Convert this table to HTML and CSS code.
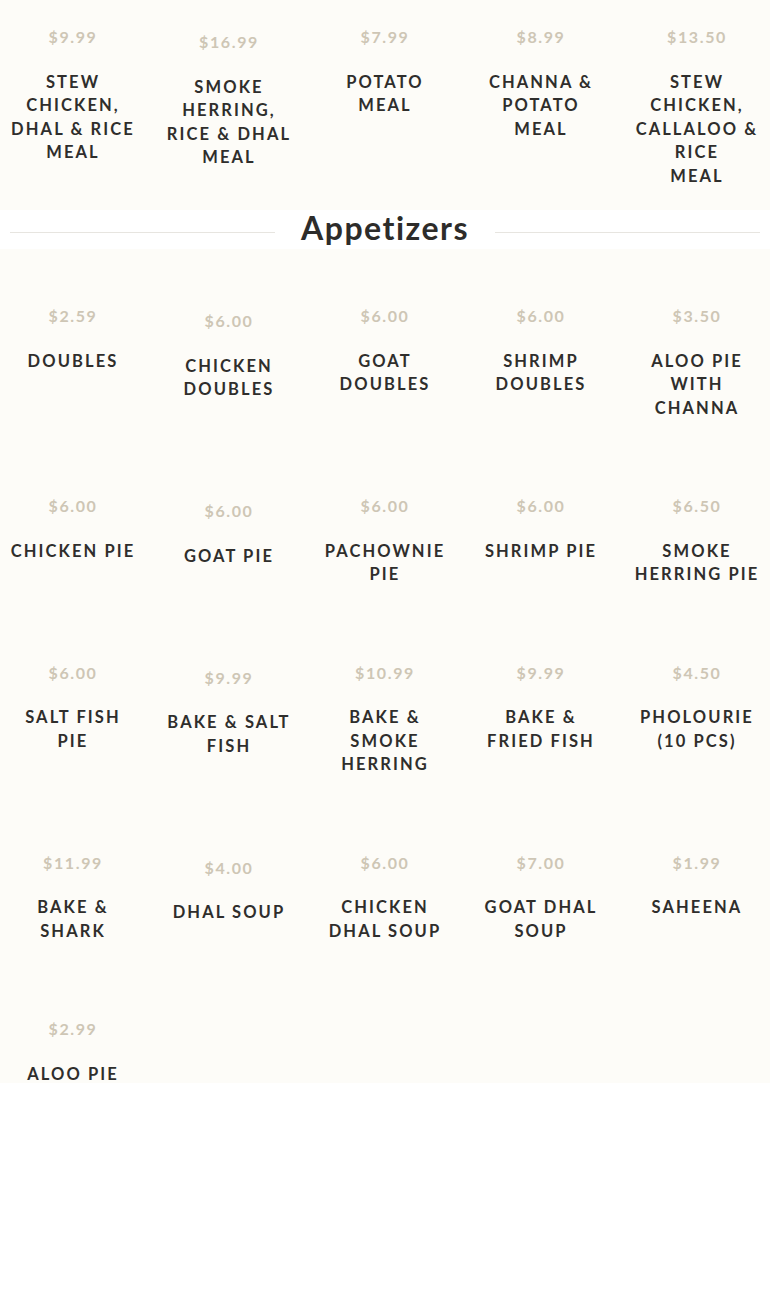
FILE: index.html
```html
<!DOCTYPE html>
<html lang="en">
<head>
<meta charset="utf-8">
<title>Menu</title>
<link rel="stylesheet" href="styles.css">
</head>
<body>
<main class="menu">
  <section class="items items--top">
    <div class="item"><div class="price">$9.99</div><div class="name">Stew<br>Chicken,<br>Dhal &amp; Rice<br>Meal</div></div>
    <div class="item"><div class="price">$16.99</div><div class="name">Smoke<br>Herring,<br>Rice &amp; Dhal<br>Meal</div></div>
    <div class="item"><div class="price">$7.99</div><div class="name">Potato<br>Meal</div></div>
    <div class="item"><div class="price">$8.99</div><div class="name">Channa &amp;<br>Potato<br>Meal</div></div>
    <div class="item"><div class="price">$13.50</div><div class="name">Stew<br>Chicken,<br>Callaloo &amp;<br>Rice<br>Meal</div></div>
  </section>

  <div class="heading">
    <span class="rule"></span>
    <h2 class="heading-title">Appetizers</h2>
    <span class="rule"></span>
  </div>

  <section class="items items--main">
    <div class="item"><div class="price">$2.59</div><div class="name">Doubles</div></div>
    <div class="item"><div class="price">$6.00</div><div class="name">Chicken<br>Doubles</div></div>
    <div class="item"><div class="price">$6.00</div><div class="name">Goat<br>Doubles</div></div>
    <div class="item"><div class="price">$6.00</div><div class="name">Shrimp<br>Doubles</div></div>
    <div class="item"><div class="price">$3.50</div><div class="name">Aloo Pie<br>With<br>Channa</div></div>

    <div class="item"><div class="price">$6.00</div><div class="name">Chicken Pie</div></div>
    <div class="item"><div class="price">$6.00</div><div class="name">Goat Pie</div></div>
    <div class="item"><div class="price">$6.00</div><div class="name">Pachownie<br>Pie</div></div>
    <div class="item"><div class="price">$6.00</div><div class="name">Shrimp Pie</div></div>
    <div class="item"><div class="price">$6.50</div><div class="name">Smoke<br>Herring Pie</div></div>

    <div class="item"><div class="price">$6.00</div><div class="name">Salt Fish<br>Pie</div></div>
    <div class="item"><div class="price">$9.99</div><div class="name">Bake &amp; Salt<br>Fish</div></div>
    <div class="item"><div class="price">$10.99</div><div class="name">Bake &amp;<br>Smoke<br>Herring</div></div>
    <div class="item"><div class="price">$9.99</div><div class="name">Bake &amp;<br>Fried Fish</div></div>
    <div class="item"><div class="price">$4.50</div><div class="name">Pholourie<br>(10 pcs)</div></div>

    <div class="item"><div class="price">$11.99</div><div class="name">Bake &amp;<br>Shark</div></div>
    <div class="item"><div class="price">$4.00</div><div class="name">Dhal Soup</div></div>
    <div class="item"><div class="price">$6.00</div><div class="name">Chicken<br>Dhal Soup</div></div>
    <div class="item"><div class="price">$7.00</div><div class="name">Goat Dhal<br>Soup</div></div>
    <div class="item"><div class="price">$1.99</div><div class="name">Saheena</div></div>

    <div class="item item--last"><div class="price">$2.99</div><div class="name">Aloo Pie</div></div>
  </section>
</main>
</body>
</html>
```

FILE: styles.css
```css
html, body {
  margin: 0;
  padding: 0;
  background: #ffffff;
}

body {
  font-family: "Lato", "Liberation Sans", sans-serif;
  color: #2f2e2c;
}

.menu {
  width: 770px;
}

.items {
  display: grid;
  grid-template-columns: repeat(5, 146px);
  column-gap: 10px;
  row-gap: 49px;
  background: #fdfcf8;
}

.items--top {
  padding: 0 0 22px;
}

.items--main {
  padding: 30px 0 0;
}

.item {
  padding-top: 26px;
  text-align: center;
}

.item:nth-child(5n+2) {
  padding-top: 31px;
}

.item--last {
  margin-bottom: -3px;
}

.price {
  font-size: 16px;
  line-height: 22px;
  font-weight: 700;
  letter-spacing: 1.6px;
  color: #cec6b5;
  margin-bottom: 22.5px;
}

.name {
  font-size: 16.5px;
  line-height: 23.5px;
  font-weight: 700;
  letter-spacing: 2.1px;
  text-transform: uppercase;
  color: #2f2e2c;
  white-space: nowrap;
}

.heading {
  display: flex;
  align-items: center;
  height: 39px;
  padding: 0 10px;
  background: #ffffff;
}

.rule {
  flex: 1;
  border-top: 1px solid #e7e5e0;
  margin-top: 5px;
}

.heading-title {
  margin: 0;
  padding: 0 26px 4px;
  font-size: 32px;
  line-height: 35px;
  font-weight: 700;
  letter-spacing: 1.5px;
  color: #2d2c2a;
}
```
